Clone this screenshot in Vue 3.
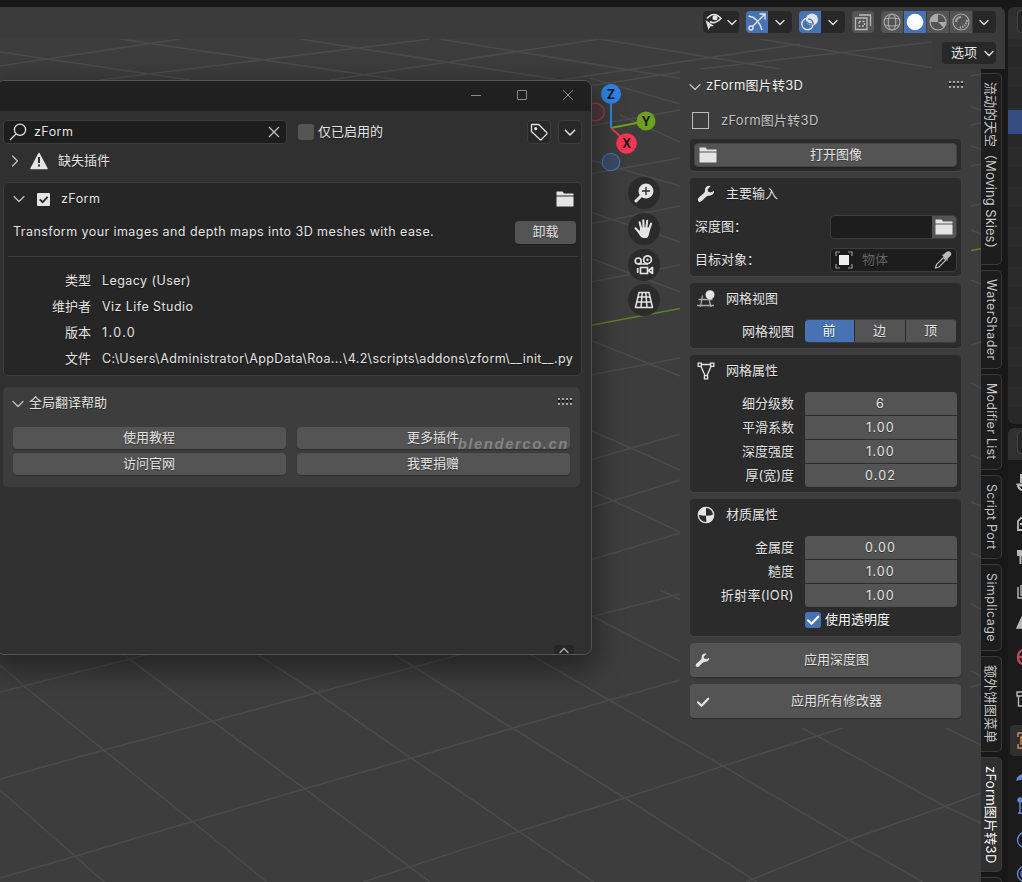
<script setup>
const gridLines = [
  'M0 692L150 654', 'M0 779L104 750 213 721 316 693 463 654', 'M0 878L76 856 194 821 304 789 412 758 513 728 610 700 680 680',
  'M363 882L520 831 625 798 723 766 817 736 981 684', 'M746 882L849 840 946 806 981 793', 'M590 617L680 594',
  'M0 790L76 857 104 882', 'M0 665L25 687 105 751 193 822 267 882', 'M124 655L212 721 305 789 430 882',
  'M258 655L317 693 411 758 518 831 594 882', 'M395 655L512 728 625 798 757 882', 'M531 655L609 700 723 766 849 840 923 882',
  'M590 615L679 661 802 728 819 737 946 807 981 823', 'M660 590L946 728 981 745',
  'M590 560L680 533', 'M590 508L680 480', 'M590 460L680 434', 'M590 375L680 358', 'M590 282L680 265', 'M590 224L680 206', 'M590 174L680 158', 'M590 126L680 110', 'M590 86L680 72',
  'M590 490L680 532', 'M590 430L680 470', 'M590 340L680 376', 'M590 258L680 292', 'M590 212L680 242', 'M590 160L680 186', 'M620 115L680 142', 'M590 78L680 104',
  'M0 66L180 39', 'M100 80L430 39', 'M330 80L600 39', 'M560 80L800 44', 'M700 69L932 42', 'M0 52L190 80', 'M120 39L400 80', 'M300 39L560 80', 'M440 39L690 80', 'M600 39L780 69', 'M760 39L940 69',
  'M971 76L981 74', 'M971 107L981 110', 'M971 125L981 123', 'M971 146L981 149', 'M971 166L981 164', 'M971 206L981 204', 'M971 230L981 234', 'M971 280L981 284', 'M971 345L981 342', 'M971 383L981 388', 'M971 455L981 459', 'M971 502L981 506', 'M971 553L981 557', 'M971 604L981 609', 'M971 671L981 676',
]
const meta = [
  ['类型', 'Legacy (User)'],
  ['维护者', 'Viz Life Studio'],
  ['版本', '1.0.0'],
  ['文件', 'C:\\Users\\Administrator\\AppData\\Roa...\\4.2\\scripts\\addons\\zform\\__init__.py'],
]
const helpLinks = ['使用教程', '更多插件', '访问官网', '我要捐赠']
const meshProps = [['细分级数', '6'], ['平滑系数', '1.00'], ['深度强度', '1.00'], ['厚(宽)度', '0.02']]
const materialProps = [['金属度', '0.00'], ['糙度', '1.00'], ['折射率(IOR)', '1.00']]
const tabs = [
  { label: '流动的天空（Moving Skies）', size: 't1' },
  { label: 'WaterShader', size: 't2' },
  { label: 'Modifier List', size: 't3' },
  { label: 'Script Port', size: 't4' },
  { label: 'Simplicage', size: 't5' },
  { label: '额外饼图菜单', size: 't6' },
  { label: 'zForm图片转3D', size: 't7', active: true },
  { label: '', size: 't8' },
]
const navTools = ['zoom', 'hand', 'camera', 'persp']
</script>

<template>
  <svg class="defs" width="0" height="0">
    <symbol id="down" viewBox="0 0 12 12"><path d="M2 4.500l4 4 4-4" fill="none" stroke="currentColor" stroke-width="1.3" stroke-linecap="round" stroke-linejoin="round" /></symbol>
    <symbol id="disclosure" viewBox="0 0 12 12"><path d="M1 3.5l5 5 5-5" fill="none" stroke="#c4c4c4" stroke-width="1.2" stroke-linecap="round" stroke-linejoin="round" /></symbol>
    <symbol id="folder" viewBox="0 0 18 16"><path d="M.5.5h6l1.500 2h9.500v2H.5zM.5 5.500h17v10H.5z" fill="currentColor" /></symbol>
    <symbol id="wrench" viewBox="0 0 18 18"><path d="M13.800 1C10.500-.2 7.300 2.600 8 6.300 7.500 8.700 1 12.200.8 14.700c-.1 1.800 1.700 2.800 3.200 1.900C6 15.200 9 11 11.200 10.700c3.300.5 6.100-1.700 5.900-4.900l-3.300 1.800-2.600-.8-.6-2.600z" fill="currentColor" /></symbol>
    <symbol id="check" viewBox="0 0 16 16"><path d="M3 8.300l3.500 3.500L13.200 4.700" fill="none" stroke="currentColor" stroke-width="2.200" stroke-linecap="round" stroke-linejoin="round" /></symbol>
    <symbol id="zoom" viewBox="0 0 20 20"><circle cx="12" cy="8" r="7.500" fill="currentColor" /><path d="M7 13l-5 5" stroke="currentColor" stroke-width="3" stroke-linecap="round" /><path d="M8 8h8M12 4v8" stroke="#2b2b2b" stroke-width="1.400" /></symbol>
    <symbol id="hand" viewBox="0 0 20 20"><path d="M7.500 11L5.600 3.200M9.600 10L9.300 1.400M12.200 10l1-8.300M14.500 12l2.600-7.300M6.500 14.500L1.500 9.300" stroke="currentColor" stroke-width="2.100" stroke-linecap="round" /><path d="M6.500 8.500h9.300c-.1 4.500-.8 10.500-3.800 10.500H9.700C6.500 19 5 14.500 2.500 11.500l3 .5z" fill="currentColor" /></symbol>
    <symbol id="camera" viewBox="0 0 20 20"><g fill="none" stroke="currentColor" stroke-width="1.700"><circle cx="4.200" cy="6" r="3" /><circle cx="13.500" cy="4.700" r="3.900" /><path d="M4 9h10M6.500 12.500h7v6h-7z" /><path d="M3.700 13v5M18.500 12.500v6l-4-3z" stroke-linejoin="round" /></g><circle cx="13.500" cy="4.700" r="1.200" fill="currentColor" /></symbol>
    <symbol id="persp" viewBox="0 0 20 20"><path d="M5 2.500h10l3.500 15h-17zM8.200 2.500l-1.200 15M11.800 2.500l1.200 15M4 7h12M2.900 12h14.200" fill="none" stroke="currentColor" stroke-width="1.500" stroke-linejoin="round" /></symbol>
    <symbol id="ball" viewBox="0 0 18 18"><circle cx="9" cy="9" r="7.700" fill="none" stroke="currentColor" stroke-width="1.300" /><path d="M9 1.300V9.800Q4.500 9.800 1.300 8.500A7.700 7.700 0 0 1 9 1.300zM9 9.800q4.500 0 7.700-1.500A7.700 7.700 0 0 1 9.500 16.700Q9 13 9 9.800z" fill="currentColor" /></symbol>
  </svg>

  <div class="screen">
    <section class="view">
      <svg class="floor" width="1005" height="882" viewBox="0 0 1005 882">
        <path v-for="(d, i) in gridLines" :key="i" :d="d" />
        <path class="axis" d="M590 325.500L680 308.500M971 250.500l10-1.700" />
      </svg>

      <header class="bar">
        <div class="drop wide"><svg width="18" height="20" viewBox="0 0 18 20"><path d="M2 6.500Q9-1.500 16 6.500 9 13 5 9.500" fill="none" stroke="currentColor" stroke-width="1.700" /><circle cx="10" cy="5.800" r="2.500" fill="currentColor" /><path d="M.5 8l8.500 6-3.800.5L3.500 18z" fill="currentColor" /></svg><svg width="12" height="12"><use href="#down" /></svg></div>
        <div class="combo g1"><span class="on"><svg width="20" height="20" viewBox="0 0 20 20" fill="none" stroke="currentColor" stroke-width="1.400"><path d="M1.500 4Q11 5 15 18M5.500 14.500L17.500 2.500M12.500 2h5.500v5.500" /><circle cx="4" cy="16" r="2" /></svg></span><span><svg width="12" height="12"><use href="#down" /></svg></span></div>
        <div class="combo g2"><span class="on"><svg width="20" height="20" viewBox="0 0 20 20"><circle cx="12" cy="7.500" r="6" fill="currentColor" /><circle cx="7.500" cy="12" r="5.700" fill="none" stroke="currentColor" stroke-width="1.400" /><path d="M6.700 9.500a5.700 5.700 0 0 0 6.500 2.300a5.700 5.700 0 0 0-5-5" fill="none" stroke="#4772b3" stroke-width="1.300" /></svg></span><span><svg width="12" height="12"><use href="#down" /></svg></span></div>
        <div class="xray"><svg width="18" height="18" viewBox="0 0 18 18" fill="none" stroke="currentColor" stroke-width="1.300"><path d="M1.500 5h11.500v11.500H1.500zM5 2h11.500v11" /><path d="M5 8.500h5.500v4.500H5z" stroke-dasharray="2 1.500" /></svg></div>
        <div class="shading">
          <span><svg width="18" height="18" viewBox="0 0 18 18" fill="none" stroke="currentColor" stroke-width="1.200"><circle cx="9" cy="9" r="8" /><ellipse cx="9" cy="9" rx="3.800" ry="8" /><path d="M2 6q7-2 14 0M2 12q7 2 14 0" /></svg></span>
          <span class="on"><svg width="18" height="18"><circle cx="9" cy="9" r="8.300" fill="#fff" /></svg></span>
          <span><svg width="18" height="18" viewBox="0 0 18 18"><circle cx="9" cy="9" r="8" fill="none" stroke="currentColor" stroke-width="1.200" /><path d="M9 1v8H1a8 8 0 0 1 8-8zM9 9l5.500 5.500A8 8 0 0 0 17 9z" fill="currentColor" /></svg></span>
          <span><svg width="18" height="18" viewBox="0 0 18 18" fill="none" stroke="currentColor" stroke-width="1.200"><circle cx="9" cy="9" r="8" /><path d="M4 9a5 5 0 0 1 5-5" stroke-width="2" /><path d="M15 7q-1 7-8 8" stroke-width="2" stroke-dasharray="1.500 1" /></svg></span>
          <span class="arrow"><svg width="12" height="12"><use href="#down" /></svg></span>
        </div>
      </header>
      <div class="tools"><button class="options">选项<svg width="12" height="12"><use href="#down" /></svg></button></div>

      <svg class="gizmo" width="80" height="100" viewBox="586 78 80 100">
        <circle cx="595.500" cy="112" r="8.800" fill="#4a3a3e" stroke="#a53a4c" stroke-width="1.200" />
        <path d="M611 104v24" stroke="#2e83e6" stroke-width="2" /><path d="M611 128l28-5.500" stroke="#6f9f1f" stroke-width="2" /><path d="M611 128l10 9" stroke="#d83a50" stroke-width="2" />
        <circle cx="611" cy="94" r="10" fill="#2e83e6" /><circle cx="646" cy="121" r="9.500" fill="#6f9f1f" /><circle cx="626.500" cy="143.500" r="10.300" fill="#f83654" />
        <circle cx="611" cy="162" r="8.700" fill="#3b4a60" stroke="#3f6fb5" stroke-width="1.300" />
        <g class="axes"><text x="611" y="98.500">Z</text><text x="646" y="125.500">Y</text><text x="626.500" y="148">X</text></g>
      </svg>
      <nav class="nav"><span v-for="t in navTools" :key="t"><svg width="20" height="20"><use :href="'#' + t" /></svg></span></nav>

      <aside class="panel">
        <h2><svg width="12" height="12"><use href="#disclosure" /></svg>zForm图片转3D<i class="grip" /></h2>
        <p class="toggle"><b />zForm图片转3D</p>
        <div class="box open"><button class="btn"><svg width="18" height="16"><use href="#folder" /></svg>打开图像</button></div>
        <div class="box input">
          <h3><svg width="18" height="18"><use href="#wrench" /></svg>主要输入</h3>
          <div class="field f1"><label>深度图：</label><div class="well"><span class="browse"><svg width="18" height="16"><use href="#folder" /></svg></span></div></div>
          <div class="field f2"><label>目标对象：</label><div class="well pick"><svg width="18" height="18" viewBox="0 0 18 18"><path d="M1 5V1h4M13 1h4v4M17 13v4h-4M5 17H1v-4" fill="none" stroke="#999" stroke-width="1.200" /><path d="M4 4h10v10H4z" fill="#eee" /></svg><em>物体</em><svg width="18" height="18" viewBox="0 0 18 18"><path d="M1.500 17l1-3.500 7-7 2.500 2.500-7 7z" fill="none" stroke="#bbb" stroke-width="1.200" /><path d="M8 4l1.500-.5 3-2.800Q15-.5 16.800 1.500q1.200 1.700-.3 3.300l-2.800 2.800L13.500 10z" fill="#bbb" /></svg></div></div>
        </div>
        <div class="box mesh">
          <h3><svg width="18" height="18" viewBox="0 0 18 18"><path d="M1.500 9.500h14M0 15.500h17M5.500 5.500L3.500 17M12.300 10.500l1.700 6.500" fill="none" stroke="#aaa" stroke-width="1.300" /><circle cx="13" cy="4.800" r="4.500" fill="currentColor" /></svg>网格视图</h3>
          <div class="row"><label>网格视图</label><div class="seg"><span class="on">前</span><span>边</span><span>顶</span></div></div>
        </div>
        <div class="box props">
          <h3><svg width="18" height="18" viewBox="0 0 18 18" fill="none" stroke="currentColor" stroke-width="1.300"><path d="M1.200 1.200h3.200v3.200H1.200zM13.600 1.200h3.200v3.200h-3.200zM7.400 13.600h3.200v3.200H7.400zM4.500 2.500h9M4 4.500l4 9M14 4.500l-4 9" /></svg>网格属性</h3>
          <div class="table"><template v-for="p in meshProps" :key="p[0]"><label>{{ p[0] }}</label><span>{{ p[1] }}</span></template></div>
        </div>
        <div class="box props mat">
          <h3><svg width="18" height="18"><use href="#ball" /></svg>材质属性</h3>
          <div class="table"><template v-for="p in materialProps" :key="p[0]"><label>{{ p[0] }}</label><span>{{ p[1] }}</span></template></div>
          <p class="alpha"><b><svg width="16" height="16"><use href="#check" /></svg></b><span>使用透明度</span></p>
        </div>
        <button class="btn big"><svg width="15" height="15"><use href="#wrench" /></svg>应用深度图</button>
        <button class="btn big"><svg width="16" height="16"><use href="#check" /></svg>应用所有修改器</button>
      </aside>

      <div class="tabs"><div v-for="t in tabs" :key="t.size" :class="['tab', t.size, { active: t.active }]">{{ t.label }}</div></div>
    </section>

    <aside class="side">
      <div class="outliner"><div class="head"><i /></div><div class="selected" /></div>
      <div class="editor">
        <div class="head"><i /></div>
        <svg width="14" height="422" viewBox="1008 460 14 422" fill="none" stroke="#b8b8b8" stroke-width="1.400">
          <path d="M1021 474v9" stroke-width="2" /><path d="M1016.500 484h6v2h-5q1 4.500 5 4.500z" fill="#b8b8b8" stroke-width="1" /><path d="M1022 518h-1l-3 3v9h4M1020 524h2" stroke-width="1.800" /><path d="M1017 550h5v6h-5z" fill="#b8b8b8" stroke="none" /><path d="M1020.500 556v8" stroke-width="2" /><path d="M1018 587v11h4M1021 585v10h2" /><path d="M1017 628l5-11v11z" fill="#b8b8b8" />
          <path d="M1022 650q-4 2-4 7t4 7M1018 657h4" stroke="#b34a57" stroke-width="2.500" /><path d="M1022 692h-5v4h5M1018.500 696v10h4" />
          <path d="M1010 729q0-4 4-4h8v31h-8q-4 0-4-4z" fill="#303030" stroke="none" /><path d="M1022 733h-4v4M1018 744v4h4M1021 737h2v7h-2z" stroke="#d58a55" />
          <path d="M1017 780q0-3 5-5v4z" fill="#6086d8" stroke="#6086d8" /><g stroke="#6086d8"><path d="M1020 801v13M1018 813h4" /><circle cx="1020" cy="800" r="2" fill="#6086d8" /><circle cx="1025" cy="840" r="7.500" /><circle cx="1025" cy="874" r="7.500" /><circle cx="1025" cy="874" r="4" /></g>
        </svg>
      </div>
    </aside>

    <section class="window">
      <div class="titlebar">
        <svg width="12" height="12" viewBox="0 0 12 12"><path d="M1 6.500h10" /></svg><svg width="12" height="12" viewBox="0 0 12 12"><rect x="1.500" y="1.500" width="9" height="9" rx=".5" /></svg><svg width="12" height="12" viewBox="0 0 12 12"><path d="M1 1l10 10M11 1L1 11" /></svg>
      </div>
      <div class="searchrow">
        <div class="search"><svg width="18" height="18" viewBox="0 0 18 18" fill="none" stroke="currentColor" stroke-width="1.300"><circle cx="11" cy="6.800" r="5.600" /><path d="M7 11l-6 6" /></svg><span class="latin">zForm</span><svg class="clear" width="12" height="12" viewBox="0 0 12 12" fill="none" stroke="#c4c4c4" stroke-width="1.200"><path d="M1 1l10 10M11 1L1 11" /></svg></div>
        <b /><span class="enabled">仅已启用的</span>
        <div class="sq tag"><svg width="18" height="18" viewBox="0 0 18 18"><path d="M1.500 1.500h7.200l8 8q.6.900 0 1.600l-5.200 5.300q-.9.700-1.700 0L1.500 8.500z" fill="none" stroke="currentColor" stroke-width="1.300" stroke-linejoin="round" /><circle cx="5.700" cy="5.600" r="1.600" fill="currentColor" /></svg></div>
        <div class="sq"><svg width="14" height="14"><use href="#down" /></svg></div>
      </div>
      <div class="missing"><svg class="right" width="12" height="12"><use href="#disclosure" /></svg><svg width="18" height="18" viewBox="0 0 18 18"><path d="M9 1.500L17 16.500H1z" fill="currentColor" stroke="currentColor" stroke-width="1.500" stroke-linejoin="round" /><path d="M9 5v6M9 12.500v2" stroke="#303030" stroke-width="2" /></svg><span>缺失插件</span></div>
      <article class="addon">
        <div class="name"><svg width="12" height="12"><use href="#disclosure" /></svg><svg width="13" height="13" viewBox="0 0 12 12"><rect width="12" height="12" rx="1" fill="currentColor" /><path d="M2.500 5.800L5.200 8.500 9.800 3.500" fill="none" stroke="#282828" stroke-width="1.700" /></svg><span class="latin">zForm</span><svg class="end" width="18" height="16"><use href="#folder" /></svg></div>
        <div class="desc"><span class="latin">Transform your images and depth maps into 3D meshes with ease.</span><button class="btn">卸载</button></div>
        <dl><template v-for="m in meta" :key="m[0]"><dt>{{ m[0] }}</dt><dd class="latin" :class="{ path: m[0] === '文件', version: m[0] === '版本' }">{{ m[1] }}</dd></template></dl>
      </article>
      <article class="help">
        <h2><svg width="12" height="12"><use href="#disclosure" /></svg>全局翻译帮助<i class="grip" /></h2>
        <div class="links"><button v-for="l in helpLinks" :key="l" class="btn">{{ l }}</button></div>
        <span class="mark">blenderco.cn</span>
      </article>
      <span class="collapse"><svg width="12" height="12"><use href="#down" /></svg></span>
    </section>
  </div>
</template>

<style>
body { background: #181818; overflow: hidden; }
</style>
<style scoped>
* { box-sizing: border-box; }
.defs { position: absolute; }
h2, h3, p, dl, dd { margin: 0; font: inherit; }
svg { flex: none; display: block; }
button { font: inherit; color: inherit; border: 0; padding: 0; }
.screen { position: relative; width: 1022px; height: 882px; overflow: hidden; display: flex; background: #181818; color: #e4e4e4; font: 13px/18px Inter, "Noto Sans CJK SC", sans-serif; letter-spacing: .2px; text-shadow: 0 1px 1px rgba(0,0,0,.4); padding-top: 7px; white-space: nowrap; }
.latin { font-size: 12.500px; letter-spacing: .43px; }
.view { position: relative; width: 1005px; height: 875px; background: #3d3d3d; border-radius: 0 7px 0 0; overflow: hidden; }
.floor { position: absolute; left: 0; top: -7px; fill: none; stroke: #4b4b4b; stroke-width: 1.6; }
.floor .axis { stroke: #5f7f2a; stroke-width: 1.6; }
.bar { position: relative; height: 32px; background: #3b3b3b; display: flex; justify-content: flex-end; align-items: center; padding: 0 9px 2px 0; }
.drop, .combo span, .arrow, .options { background: #282828; }
.drop { width: 36px; height: 22px; display: flex; align-items: center; justify-content: space-between; border-radius: 4px; padding: 0 1px 0 2px; margin-right: 7px; }
.combo { display: flex; height: 22px; border-radius: 4px; overflow: hidden; margin-right: 7px; }
.combo span { width: 24px; display: grid; place-items: center; }
.combo span.on, .shading .on { background: #4772b3; width: 22px; }
.xray { width: 22px; height: 22px; background: #545454; color: #bbb; border-radius: 4px; display: grid; place-items: center; margin-right: 7px; }
.shading { display: flex; height: 22px; border-radius: 4px; overflow: hidden; gap: 1px; color: #aaa; }
.shading span { width: 22px; background: #545454; display: grid; place-items: center; }
.shading .arrow { width: 23px; background: #282828; color: #e4e4e4; padding-right: 2px; }
.tools { position: relative; height: 30px; margin-left: 932px; background: #3b3b3b; padding: 3px 0 0 10px; }
.options { width: 54px; height: 22px; border-radius: 4px; display: flex; align-items: center; justify-content: space-between; padding: 0 1px 2px 9px; letter-spacing: 0; }
.options svg { margin-top: 2px; }
.gizmo { position: absolute; left: 586px; top: 71px; }
.axes { font: 700 12.500px Inter, sans-serif; text-anchor: middle; fill: #181818; letter-spacing: 0; text-shadow: none; }
.nav { position: absolute; left: 628px; top: 170px; display: grid; gap: 3.800px; }
.nav span { width: 32px; height: 32px; border-radius: 50%; background: #2b2b2b; display: grid; place-items: center; }
.panel { position: absolute; left: 680px; top: 62px; width: 291px; height: 659px; background: #3d3d3d; padding: 0 10px; letter-spacing: 0; }
h2 { display: flex; align-items: center; gap: 5px; }
.panel h2 { height: 34px; padding-bottom: 2px; color: #f2f2f2; letter-spacing: .2px; }
.panel h2 svg { margin: 4px 0 0 -1px; }
.grip { margin-left: auto; width: 15px; height: 7px; background: radial-gradient(circle at 1px 1px, #a8a8a8 .8px, transparent 1.1px) 0 0 / 4px 5px, radial-gradient(circle at 1px 1px, #161616 .8px, transparent 1.1px) 0 2px / 4px 5px; }
.panel .grip { margin-right: -3px; margin-top: -1px; }
.toggle { display: flex; align-items: center; height: 35px; gap: 12px; color: #c4c4c4; padding: 0 0 2px 3px; letter-spacing: .25px; }
.toggle b { width: 17px; height: 17px; border: 1px solid #bbb; margin: 2px 0 0 -1px; }
.box { background: #2b2b2b; border-radius: 4px; box-shadow: 0 1px #464646; margin-bottom: 7px; padding: 0 4px; }
.btn { position: relative; display: flex; align-items: center; justify-content: center; height: 24px; width: 100%; background: #545454; border-radius: 4px; box-shadow: 0 1px 1px rgba(0,0,0,.25); text-shadow: inherit; letter-spacing: 0; }
.open { margin-top: 1px; height: 32px; padding-top: 4px; }
.open .btn { justify-content: space-between; padding: 0 94px 2px 4px; border: 1px solid #454545; }
.open svg { margin-top: 2px; }
h3 { display: flex; align-items: center; gap: 11px; height: 32px; padding: 0 0 3px 3px; }
h3 svg { margin-top: 2px; }
.input { height: 98px; }
.field { display: flex; align-items: center; height: 33px; padding-left: 1px; }
.field label { width: 135px; padding-bottom: 2px; }
.well { width: 127px; height: 24px; background: #1d1d1d; border: 1px solid #3d3d3d; border-radius: 4px; display: flex; align-items: center; }
.browse { margin-left: auto; width: 24px; height: 22px; background: #545454; display: grid; place-items: center; border-radius: 0 3px 3px 0; }
.pick { padding: 0 4px; }
.pick em { font-style: normal; color: #666; margin: 0 auto 0 9px; padding-bottom: 2px; }
.mesh { height: 65px; }
.row { display: flex; align-items: center; height: 32px; justify-content: flex-end; gap: 11px; }
.seg { width: 152px; height: 24px; display: grid; grid-template-columns: 49px 50px 50px; gap: 1px; overflow: hidden; border-radius: 4px; text-align: center; border: solid #3d3d3d; border-width: 1px 0; line-height: 20px; }
.seg span { background: #545454; padding-right: 1px; }
.seg .on { background: #4772b3; color: #fff; }
.props { height: 137px; }
.table { display: grid; grid-template-columns: 100px 152px; column-gap: 11px; row-gap: 1px; padding-top: 5px; position: relative; }
.table label { text-align: right; height: 23px; line-height: 22px; letter-spacing: 0; }
.mat .table label:last-of-type { letter-spacing: .38px; }
.table span { background: #545454; text-align: center; height: 23px; font-size: 12.500px; line-height: 23px; letter-spacing: 1.100px; padding-right: 1px; }
.table span:nth-of-type(1) { border-radius: 4px 4px 0 0; }
.table span:last-child { border-radius: 0 0 4px 4px; }
.alpha { display: flex; align-items: center; gap: 4px; margin: 4px 0 0 111px; height: 18px; color: #fff; }
.alpha span { padding-bottom: 2px; }
.alpha b { width: 16px; height: 16px; border-radius: 3px; background: #4772b3; }
.big { height: 34px; margin-bottom: 7px; padding: 0 0 2px 22px; }
.big svg { position: absolute; left: 5px; top: 10px; }
.tabs { position: absolute; left: 981px; top: 62px; width: 24px; height: 813px; background: #181818; padding-top: 4px; display: flex; flex-direction: column; gap: 5px; }
.tab { flex: none; width: 21px; writing-mode: vertical-rl; text-orientation: sideways; line-height: 20px; padding-top: 8px; color: #c8c8c8; background: #1d1d1d; border: 1px solid #393939; border-left: 0; border-radius: 0 5px 5px 0; font-size: 12.500px; letter-spacing: .25px; }
.t1 { height: 192px; font-size: 13px; letter-spacing: .02px; } .t2 { height: 99px; letter-spacing: .45px; } .t3 { height: 96px; } .t4 { height: 84px; } .t5 { height: 87px; letter-spacing: .4px; } .t6 { height: 96px; font-size: 13px; letter-spacing: 0; } .t7 { height: 115px; font-size: 13px; } .t8 { height: 40px; }
.tab.active { background: #303030; color: #fff; letter-spacing: .25px; }
.side { width: 14px; margin-left: 3px; height: 875px; }
.outliner { height: 417px; border-radius: 6px 0 0 6px; overflow: hidden; background: repeating-linear-gradient(#282828 0 20px, #2b2b2b 20px 40px); }
.side .head { height: 32px; background: #303030; position: relative; padding: 3px 0 0 9px; }
.head i { display: block; width: 20px; height: 23px; border: 1px solid #444; border-radius: 4px; background: #262626; }
.selected { height: 24px; margin-top: 71px; background: #334d80; }
.editor { margin-top: 4px; border-radius: 6px 0 0 0; overflow: hidden; background: #1b1b1b; }
.window { position: absolute; left: -4px; top: 80px; width: 596px; height: 575px; background: #303030; border: 1px solid #555; border-radius: 8px; box-shadow: 0 10px 28px 4px rgba(0,0,0,.42); overflow: hidden; padding-left: 3px; }
.titlebar { height: 30px; background: #202020; margin-left: -3px; display: flex; align-items: center; justify-content: flex-end; gap: 34px; padding: 0 17px 2px 0; fill: none; stroke: #8d8d8d; stroke-width: 1; }
.searchrow { display: flex; align-items: center; height: 24px; margin: 9px 0 0 3px; }
.search { width: 284px; height: 24px; background: #1d1d1d; border: 1px solid #3d3d3d; border-radius: 4px; display: flex; align-items: center; padding-left: 5px; }
.search span { margin-left: 7px; }
.clear { margin: 0 6px 0 auto; }
.searchrow b { width: 16px; height: 16px; border-radius: 3px; background: #545454; margin: 0 4px 0 11px; }
.enabled { letter-spacing: 0; padding-bottom: 2px; }
.sq { width: 24px; height: 24px; background: #282828; border: 1px solid #3d3d3d; border-radius: 4px; display: grid; place-items: center; margin-left: 7px; }
.tag { margin-left: 144px; }
.missing { display: flex; align-items: center; height: 34px; padding-left: 9px; gap: 9px; letter-spacing: 0; }
.missing span { padding: 0 0 2px 1px; }
.right { transform: rotate(-90deg); }
.addon { margin: 4px 0 0 3px; width: 579px; height: 194px; background: #262626; border: 1px solid #3d3d3d; border-radius: 5px; }
.name { display: flex; align-items: center; height: 32px; padding: 0 7px 0 9px; gap: 11.500px; }
.name .latin { padding-bottom: 1px; }
.end { margin-left: auto; }
.desc { display: flex; align-items: center; justify-content: space-between; height: 34px; padding: 0 5px 0 9px; }
.desc .latin { padding-bottom: 1px; }
.desc .btn { width: 61px; height: 23px; padding-bottom: 2px; }
dl { display: grid; grid-template-columns: 83px 1fr; column-gap: 11px; line-height: 26px; margin: 7px 3px 0 4px; padding-top: 10px; border-top: 1px solid #3d3d3d; }
dt { text-align: right; letter-spacing: 0; }
dd { position: relative; top: 1px; }
dd.path { letter-spacing: .37px; }
dd.version { letter-spacing: 1.400px; }
.help { position: relative; margin: 11px 0 0 3px; width: 577px; height: 100px; background: #3d3d3d; border-radius: 5px; padding: 0 10px; }
.help h2 { height: 32px; margin-left: -1px; padding-bottom: 2px; letter-spacing: 0; }
.help h2 svg { margin-top: 3px; }
.help .grip { margin-right: -3px; margin-top: -1px; }
.links { display: grid; grid-template-columns: 273px 273px; gap: 4px 11px; margin-top: 8px; }
.links .btn { height: 22px; padding: 0 1px 2px 0; }
.mark { position: absolute; right: 11px; top: 47px; color: rgba(200,200,200,.42); font: italic 700 15px/20px "Liberation Sans", sans-serif; letter-spacing: 1.500px; text-shadow: none; }
.collapse { position: absolute; right: 17px; bottom: -3px; width: 20px; height: 12px; background: #262626; border-radius: 4px; color: #aaa; padding-left: 4px; }
.collapse svg { transform: rotate(180deg); }
</style>
